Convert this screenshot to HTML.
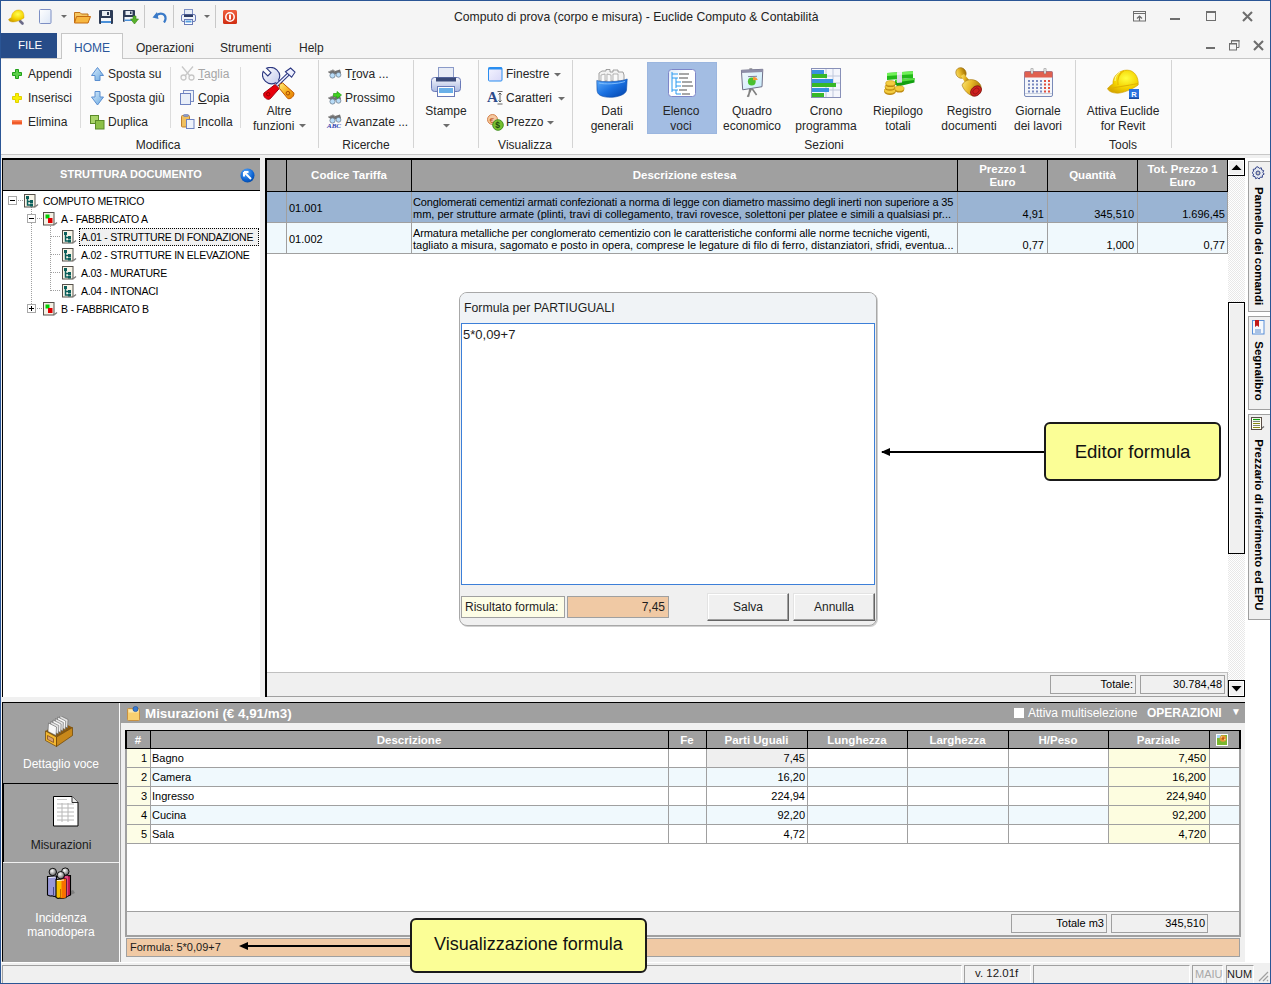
<!DOCTYPE html>
<html><head><meta charset="utf-8">
<style>
*{margin:0;padding:0;box-sizing:border-box}
html,body{width:1271px;height:984px;overflow:hidden;background:#f0f0f0;font-family:"Liberation Sans",sans-serif;color:#000}
.a{position:absolute}
.t{position:absolute;white-space:nowrap;line-height:1}
.rb{font-size:12px;color:#262626}
.c{text-align:center}
.g{font-size:11px}
.hd{color:#fff;font-weight:bold;font-size:11.5px;text-align:center}
</style></head><body>
<!-- window frame -->
<div class="a" style="left:0;top:0;width:1271px;height:984px;background:#f0f0f0;border:1px solid #2a5595"></div>

<!-- TITLE BAR -->
<div class="a" style="left:1px;top:1px;width:1269px;height:32px;background:#f5f5f5"></div>
<div class="t rb" style="left:454px;top:11px;font-size:12.2px;color:#222">Computo di prova (corpo e misura) - Euclide Computo &amp; Contabilità</div>

<svg class="a" style="left:8px;top:9px" width="17" height="17" viewBox="0 0 17 17"><defs><radialGradient id="hg" cx="0.6" cy="0.35" r="0.7"><stop offset="0" stop-color="#ffff50"/><stop offset="0.6" stop-color="#f4d000"/><stop offset="1" stop-color="#d0a000"/></radialGradient></defs><path d="M12 12 L14.5 14.5" stroke="#6a6a88" stroke-width="2.6" stroke-linecap="round"/><path d="M0.5 10.5 C1.5 9.5 2.5 9 3.5 8.5 C3.5 5 5.5 1.5 10 1 C14 0.6 16 3.5 16 7.5 L16 9 C12 11.5 7.5 13 5 13 C2.5 13 0.8 12 0.5 10.5 Z" fill="url(#hg)" stroke="#d0a000" stroke-width="0.4"/></svg>
<svg class="a" style="left:39px;top:9px" width="13" height="15" viewBox="0 0 13 15"><defs><linearGradient id="nd" x1="0" y1="0" x2="1" y2="1"><stop offset="0" stop-color="#fff"/><stop offset="1" stop-color="#dce6f5"/></linearGradient></defs><rect x="0.5" y="0.5" width="11.5" height="14" fill="url(#nd)" stroke="#7d8fc4" rx="1"/></svg>
<svg class="a" style="left:61px;top:15px" width="6" height="4" viewBox="0 0 6 4"><path d="M0 0 H6 L3 3 Z" fill="#6b6b6b"/></svg>
<svg class="a" style="left:74px;top:11px" width="17" height="13" viewBox="0 0 17 13"><path d="M0.5 1.5 H6 L7.5 3 H14 V11.5 H0.5 Z" fill="#f5c660" stroke="#c07018"/><path d="M2.5 5.5 H16.5 L14 12 H0.5 Z" fill="#f7b740" stroke="#c46a10"/></svg>
<svg class="a" style="left:99px;top:10px" width="15" height="15" viewBox="0 0 15 15"><rect x="0" y="0" width="14" height="14" rx="1" fill="#2d3b56"/><rect x="3" y="1" width="8" height="5" fill="#e8ecf2"/><rect x="8" y="2" width="2" height="3" fill="#2d3b56"/><rect x="2" y="8" width="10" height="6" fill="#f4f6fa"/><rect x="2" y="11" width="10" height="2" fill="#4a90d8"/></svg>
<svg class="a" style="left:123px;top:10px" width="16" height="15" viewBox="0 0 16 15"><rect x="0" y="0" width="12" height="12" rx="1" fill="#2d3b56"/><rect x="2.5" y="1" width="7" height="4" fill="#e8ecf2"/><rect x="7" y="1.5" width="1.5" height="2.5" fill="#2d3b56"/><rect x="1.5" y="7" width="9" height="5" fill="#f4f6fa"/><rect x="1.5" y="9.5" width="9" height="1.5" fill="#4a90d8"/><path d="M10 6 H13 V9 H15.5 L11.5 14 L7.5 9 H10 Z" fill="#58b02c" stroke="#3a8a18" stroke-width="0.6"/></svg>
<div class="a" style="left:144px;top:5px;width:1px;height:23px;background:#c8c8c8"></div>
<svg class="a" style="left:152px;top:11px" width="15" height="12" viewBox="0 0 15 12"><path d="M4 4.5 C9 1 14 3 13.5 8 C13.3 9.5 12.8 10.5 12 11.5" stroke="#3a7ac8" stroke-width="2.2" fill="none"/><path d="M0.5 6.5 L5 1 L6.5 8 Z" fill="#3a7ac8"/></svg>
<div class="a" style="left:173px;top:5px;width:1px;height:23px;background:#c8c8c8"></div>
<svg class="a" style="left:181px;top:9px" width="15" height="16" viewBox="0 0 15 16"><rect x="3.5" y="0.5" width="8" height="6" fill="#e6ecf6" stroke="#7d8fc4"/><rect x="0.5" y="5.5" width="14" height="7" rx="1.5" fill="#f0f3fa" stroke="#6a7cb8"/><rect x="3" y="5.5" width="9" height="2.5" fill="#2d3b66"/><rect x="3.5" y="10.5" width="8" height="5" fill="#fff" stroke="#6a7cb8"/><rect x="4.5" y="11.5" width="6" height="2" fill="#5aa0e0"/></svg>
<svg class="a" style="left:204px;top:15px" width="6" height="4" viewBox="0 0 6 4"><path d="M0 0 H6 L3 3 Z" fill="#6b6b6b"/></svg>
<div class="a" style="left:215px;top:5px;width:1px;height:23px;background:#c8c8c8"></div>
<svg class="a" style="left:223px;top:10px" width="15" height="15" viewBox="0 0 15 15"><defs><linearGradient id="pw" x1="0" y1="0" x2="0" y2="1"><stop offset="0" stop-color="#f06040"/><stop offset="1" stop-color="#d02c10"/></linearGradient></defs><rect x="0" y="0" width="14" height="14" rx="1.5" fill="url(#pw)"/><circle cx="7" cy="7" r="4.2" stroke="#fff" stroke-width="1.5" fill="none"/><rect x="6" y="4.5" width="2" height="5" fill="#fff"/></svg>
<svg class="a" style="left:1133px;top:11px" width="14" height="11" viewBox="0 0 14 11"><rect x="0.5" y="0.5" width="12" height="9.5" fill="none" stroke="#6e6e6e"/><path d="M1 2.5 H12.5" stroke="#6e6e6e"/><path d="M6.5 10 V5 M4 7.5 L6.5 5 L9 7.5" stroke="#6e6e6e" stroke-width="1.2" fill="none"/></svg>
<div class="a" style="left:1170px;top:18px;width:10px;height:2px;background:#6e6e6e"></div>
<svg class="a" style="left:1206px;top:11px" width="10" height="10" viewBox="0 0 10 10"><rect x="0.5" y="0.5" width="9" height="9" fill="none" stroke="#6e6e6e"/><rect x="0" y="0" width="10" height="2" fill="#6e6e6e"/></svg>
<svg class="a" style="left:1242px;top:11px" width="11" height="11" viewBox="0 0 11 11"><path d="M1 1 L10 10 M10 1 L1 10" stroke="#6e6e6e" stroke-width="2.1"/></svg>
<!-- TABS ROW -->
<div class="a" style="left:1px;top:33px;width:1269px;height:25px;background:#f5f5f5"></div>
<div class="a" style="left:1px;top:58px;width:1269px;height:1px;background:#c6c6c6"></div>
<div class="a" style="left:1px;top:33px;width:56px;height:25px;background:#274c88"></div>
<div class="t" style="left:18px;top:40px;font-size:11.5px;color:#fff">FILE</div>
<div class="a" style="left:61px;top:33px;width:62px;height:26px;background:#fbfbfb;border:1px solid #c6c6c6;border-bottom:none"></div>
<div class="t rb" style="left:74px;top:42px;color:#2b579a">HOME</div>
<div class="t rb" style="left:136px;top:42px">Operazioni</div>
<div class="t rb" style="left:220px;top:42px">Strumenti</div>
<div class="t rb" style="left:299px;top:42px">Help</div>

<div class="a" style="left:1206px;top:47px;width:9px;height:2px;background:#6e6e6e"></div>
<svg class="a" style="left:1229px;top:40px" width="11" height="11" viewBox="0 0 11 11"><rect x="0.5" y="3.5" width="7" height="6.5" fill="none" stroke="#6e6e6e"/><rect x="0" y="3" width="8" height="1.5" fill="#6e6e6e"/><path d="M2.5 3 V0.5 H10 V7.5 H8" fill="none" stroke="#6e6e6e"/><rect x="2.5" y="0" width="8" height="1.5" fill="#6e6e6e"/></svg>
<svg class="a" style="left:1253px;top:40px" width="11" height="11" viewBox="0 0 11 11"><path d="M1 1 L10 10 M10 1 L1 10" stroke="#6e6e6e" stroke-width="2.1"/></svg>
<!-- RIBBON BODY -->
<div class="a" style="left:1px;top:59px;width:1269px;height:95px;background:#fbfbfb"></div>
<div class="a" style="left:1px;top:154px;width:1269px;height:1px;background:#c8c8c8"></div>
<div class="a" style="left:1px;top:155px;width:1269px;height:3px;background:#f0f0f0"></div>

<div id="ribbon"></div>
<div class="a" style="left:647px;top:62px;width:70px;height:72px;background:#a3bde3;border:1px solid #9bb6df"></div>
<svg class="a" style="left:12px;top:69px" width="11" height="11" viewBox="0 0 11 11"><path d="M3.5 0.5 H6.5 V3.5 H9.5 V6.5 H6.5 V9.5 H3.5 V6.5 H0.5 V3.5 H3.5 Z" fill="#5cd04a" stroke="#20a018"/></svg>
<svg class="a" style="left:12px;top:93px" width="11" height="11" viewBox="0 0 11 11"><path d="M3.5 0.5 H6.5 V3.5 H9.5 V6.5 H6.5 V9.5 H3.5 V6.5 H0.5 V3.5 H3.5 Z" fill="#f8f000" stroke="#e0d000"/></svg>
<svg class="a" style="left:12px;top:120px" width="11" height="5" viewBox="0 0 11 5"><rect x="0" y="0" width="10" height="4.5" fill="#f05a28"/><rect x="0" y="0" width="10" height="1.5" fill="#ff8a60"/></svg>
<svg class="a" style="left:91px;top:67px" width="13" height="15" viewBox="0 0 13 15"><defs><linearGradient id="ua" x1="0" y1="0" x2="1" y2="1"><stop offset="0" stop-color="#d8ecfc"/><stop offset="1" stop-color="#6aa8e0"/></linearGradient></defs><path d="M6.5 0.5 L12.5 8.5 H9 V13.5 H4 V8.5 H0.5 Z" fill="url(#ua)" stroke="#5a8ed0"/></svg>
<svg class="a" style="left:91px;top:91px" width="13" height="15" viewBox="0 0 13 15"><defs><linearGradient id="da" x1="0" y1="0" x2="1" y2="1"><stop offset="0" stop-color="#d8ecfc"/><stop offset="1" stop-color="#6aa8e0"/></linearGradient></defs><path d="M6.5 14 L12.5 6 H9 V0.5 H4 V6 H0.5 Z" fill="url(#da)" stroke="#5a8ed0"/></svg>
<svg class="a" style="left:90px;top:115px" width="15" height="15" viewBox="0 0 15 15"><rect x="0.5" y="0.5" width="8" height="8" fill="#a8d468" stroke="#5a8a28"/><rect x="5.5" y="5.5" width="8.5" height="8.5" fill="#8cc048" stroke="#5a8a28"/></svg>
<svg class="a" style="left:180px;top:66px" width="15" height="15" viewBox="0 0 15 15"><path d="M2 0.5 L10 10 M13 0.5 L5 10" stroke="#c8c8c8" stroke-width="1.3"/><circle cx="3.5" cy="11.5" r="2.5" fill="none" stroke="#c8c8c8" stroke-width="1.3"/><circle cx="11.5" cy="11.5" r="2.5" fill="none" stroke="#c8c8c8" stroke-width="1.3"/></svg>
<svg class="a" style="left:180px;top:90px" width="15" height="15" viewBox="0 0 15 15"><rect x="3.5" y="0.5" width="10" height="11" fill="#eef2fa" stroke="#7d8fc4"/><rect x="0.5" y="3.5" width="10" height="11" fill="#e8eef8" stroke="#6e82c0"/></svg>
<svg class="a" style="left:181px;top:114px" width="14" height="15" viewBox="0 0 14 15"><rect x="0.5" y="1.5" width="8" height="11.5" rx="1" fill="#f0c060" stroke="#c08030"/><rect x="2.5" y="0.5" width="5" height="2" rx="0.8" fill="#8a9ac8" stroke="#6a7ab0" stroke-width="0.6"/><rect x="5.5" y="5.5" width="7.5" height="9" fill="#eef2fa" stroke="#6e82c0"/></svg>
<svg class="a" style="left:262px;top:67px" width="34" height="33" viewBox="0 0 34 33"><defs><linearGradient id="wr" x1="0" y1="0" x2="1" y2="1"><stop offset="0" stop-color="#ffffff"/><stop offset="1" stop-color="#b8c0e8"/></linearGradient><linearGradient id="oh" x1="0" y1="0" x2="1" y2="1"><stop offset="0" stop-color="#fff080"/><stop offset="0.5" stop-color="#f8b020"/><stop offset="1" stop-color="#e07800"/></linearGradient></defs><path d="M4.5 1.2 L9 5.7 L5.8 8.9 L1.2 4.4 C0 7.5 0.5 11.5 3.5 14.3 C6.5 17 10.5 17.5 13.8 15.8 L18 19.5 L20.5 17 L16.6 13 C18.3 9.8 17.8 5.6 14.8 2.8 C12 0.4 8 -0.2 4.5 1.2 Z" fill="url(#wr)" stroke="#2a3680" stroke-width="1.1"/><path d="M14.5 18.5 L27 6.5" stroke="#2a3680" stroke-width="3.6"/><path d="M14.5 18.5 L27 6.5" stroke="#eef0ff" stroke-width="1.6"/><path d="M23.5 4.8 L28.6 1 L33 5.2 L29.6 10.2 L27.4 8.2 L25.6 6.6 Z" fill="#eef0ff" stroke="#2a3680" stroke-width="1.1"/><path d="M1.8 26.2 L13 17.6 L17.2 21.6 L8.2 31.8 C5.5 33.5 0.8 30.5 1.8 26.2 Z" fill="#e8000c" stroke="#a00010" stroke-width="1"/><circle cx="6.2" cy="27.2" r="1.7" fill="none" stroke="#8a0000" stroke-width="0.9"/><path d="M17.5 17.5 L20.5 15.8 L31.8 25.8 C32.8 28.8 28.8 32.6 25.8 31.6 L17.2 21.2 Z" fill="url(#oh)" stroke="#c05800" stroke-width="1"/><circle cx="25.9" cy="26.2" r="1.8" fill="none" stroke="#a04000" stroke-width="0.9"/></svg>
<svg class="a" style="left:327px;top:69px" width="15" height="10" viewBox="0 0 15 10"><path d="M1 3 L6 0.5 L8 2 L13 0.5 L14 4 L10 5 L5 6 Z" fill="#707070"/><path d="M1 3 L6 1 L8 2.5" stroke="#a0a0a0" stroke-width="0.8" fill="none"/><circle cx="5.5" cy="6.5" r="2.6" fill="#b8dcf8" stroke="#708090" stroke-width="0.8"/><circle cx="11.5" cy="5.8" r="2.4" fill="#b8dcf8" stroke="#708090" stroke-width="0.8"/></svg>
<svg class="a" style="left:327px;top:95px" width="15" height="10" viewBox="0 0 15 10"><path d="M1 3 L6 0.5 L8 2 L13 0.5 L14 4 L10 5 L5 6 Z" fill="#707070"/><path d="M1 3 L6 1 L8 2.5" stroke="#a0a0a0" stroke-width="0.8" fill="none"/><circle cx="5.5" cy="6.5" r="2.6" fill="#b8dcf8" stroke="#708090" stroke-width="0.8"/><circle cx="11.5" cy="5.8" r="2.4" fill="#b8dcf8" stroke="#708090" stroke-width="0.8"/></svg>
<svg class="a" style="left:333px;top:91px" width="9" height="8" viewBox="0 0 9 8"><path d="M0.5 2.5 H4 V0.5 L8.5 4 L4 7.5 V5.5 H0.5 Z" fill="#40d020" stroke="#20a010" stroke-width="0.7"/></svg>
<svg class="a" style="left:327px;top:114px" width="15" height="10" viewBox="0 0 15 10"><path d="M1 3 L6 0.5 L8 2 L13 0.5 L14 4 L10 5 L5 6 Z" fill="#707070"/><path d="M1 3 L6 1 L8 2.5" stroke="#a0a0a0" stroke-width="0.8" fill="none"/><circle cx="5.5" cy="6.5" r="2.6" fill="#b8dcf8" stroke="#708090" stroke-width="0.8"/><circle cx="11.5" cy="5.8" r="2.4" fill="#b8dcf8" stroke="#708090" stroke-width="0.8"/></svg>
<div class="t" style="left:327px;top:123px;font-size:7px;font-style:italic;font-family:'Liberation Serif',serif;color:#2a40b0;font-weight:bold">ABC</div>
<svg class="a" style="left:431px;top:67px" width="31" height="31" viewBox="0 0 31 31"><defs><linearGradient id="pb" x1="0" y1="0" x2="0" y2="1"><stop offset="0" stop-color="#f4f6fc"/><stop offset="1" stop-color="#aab8e0"/></linearGradient></defs><rect x="7.5" y="0.5" width="15" height="12" fill="#e8ecf6" stroke="#8a9ac8"/><rect x="0.5" y="10.5" width="29" height="14" rx="3" fill="url(#pb)" stroke="#6a7ab8"/><rect x="5" y="10.5" width="20" height="4" fill="#3a4a78"/><rect x="6.5" y="19.5" width="17" height="10" fill="#fff" stroke="#6a7ab8"/><rect x="8" y="21" width="14" height="5" fill="#6ab0e8"/></svg>
<svg class="a" style="left:488px;top:67px" width="15" height="15" viewBox="0 0 15 15"><defs><linearGradient id="fw" x1="0" y1="0" x2="1" y2="1"><stop offset="0" stop-color="#f4f4ff"/><stop offset="1" stop-color="#d8d8f8"/></linearGradient></defs><rect x="0.5" y="0.5" width="13.5" height="13.5" rx="1" fill="url(#fw)" stroke="#2a8ef0"/><rect x="0.5" y="0.5" width="13.5" height="2" fill="#2a8ef0"/></svg>
<div class="t" style="left:487px;top:90px;font-size:15px;font-weight:bold;font-family:'Liberation Serif',serif;color:#2a4a8a">A</div>
<svg class="a" style="left:497px;top:91px" width="6" height="14" viewBox="0 0 6 14"><path d="M0.5 0.5 H5.5 M3 2 V11 M1.5 3.5 L3 2 L4.5 3.5 M1.5 9.5 L3 11 L4.5 9.5 M0.5 13 H5.5" stroke="#404040" stroke-width="0.8" fill="none"/></svg>
<svg class="a" style="left:487px;top:114px" width="17" height="17" viewBox="0 0 17 17"><circle cx="5.5" cy="5.5" r="5" fill="#f4c8a0" stroke="#d07840" stroke-width="0.9"/><text x="2.5" y="8.5" font-size="8" fill="#c05020" font-family="Liberation Sans">€</text><circle cx="11" cy="11" r="5.3" fill="#78c030" stroke="#3a8a18" stroke-width="0.9"/><text x="8.3" y="14.3" font-size="8.5" font-weight="bold" fill="#204a10" font-family="Liberation Sans">$</text></svg>
<svg class="a" style="left:596px;top:68px" width="32" height="30" viewBox="0 0 32 30"><defs><linearGradient id="bk" x1="0" y1="0" x2="1" y2="1"><stop offset="0" stop-color="#60b0ff"/><stop offset="0.5" stop-color="#1a70e0"/><stop offset="1" stop-color="#0040a8"/></linearGradient></defs><path d="M3 13 L3 5 L6 3 L10 3 L10 1.5 L14 1.5 L14 4 L17 4 L17 2 L22 2 L22 4 L27 4 L28 7 L28 13 Z" fill="#f2f2f2" stroke="#8a8a8a" stroke-width="0.8"/><path d="M5 14 L5 7 L9 6 L9 14 M11 14 L11 6 L15 7 L15 14 M17 14 L17 6 L22 6 L22 14" fill="#fafafa" stroke="#9a9a9a" stroke-width="0.7"/><path d="M0.8 12.5 C6 14.5 24 14 31.2 11 L30.5 22 C30 25.5 26 27.5 20 28.8 C13 30 6 29 3 26.5 C1.8 25.5 1.2 24 1 22 Z" fill="url(#bk)" stroke="#0a4aa8" stroke-width="0.6"/><path d="M3 15 C8 16.5 22 16 29 13.5" stroke="#90c8ff" stroke-width="0.8" fill="none"/></svg>
<svg class="a" style="left:668px;top:69px" width="28" height="28" viewBox="0 0 28 28"><defs><linearGradient id="el" x1="0" y1="0" x2="1" y2="1"><stop offset="0" stop-color="#dceaf8"/><stop offset="0.35" stop-color="#fff"/></linearGradient></defs><rect x="0.5" y="0.5" width="27" height="27" rx="3" fill="url(#el)" stroke="#7e86c8"/><path d="M4 3 V23 M4 5 H10 M4 9 H10 M8 9 V19 M8 13 H13 M8 17 H13 M4 21 H10 M8 21 V25 H13" stroke="#2a9af0" stroke-width="1" fill="none"/><path d="M11 5 H21 M11 9 H20 M14 13 H24 M14 17 H25 M11 21 H19 M14 25 H22" stroke="#8a8a8a" stroke-width="1.6"/></svg>
<svg class="a" style="left:740px;top:67px" width="25" height="32" viewBox="0 0 25 32"><defs><linearGradient id="bd" x1="0" y1="0" x2="1" y2="1"><stop offset="0" stop-color="#f4f8fc"/><stop offset="1" stop-color="#c8ecfc"/></linearGradient></defs><path d="M11.5 21.5 L7.5 29.8 M10 21.5 L8.5 29.5 M12 21.5 L16.6 28" stroke="#808080" stroke-width="1.6"/><rect x="9.2" y="1" width="3.2" height="2" rx="0.8" fill="#a8a8a8"/><path d="M1.4 3.3 L22.8 2.3 L22 19.7 L2.7 22.8 Z" fill="url(#bd)" stroke="#707088" stroke-width="1"/><path d="M1.4 3.3 L22.8 2.3 L22.8 5 L1.6 6 Z" fill="#8e8ea8"/><path d="M8.1 9.6 L17 9.3" stroke="#707090" stroke-width="0.9"/><circle cx="11.8" cy="14.5" r="3.9" fill="#48c030"/><path d="M13 10.2 A4 4 0 0 1 17.8 12.9 L13 13.2 Z" fill="#f89838"/></svg>
<svg class="a" style="left:811px;top:68px" width="30" height="30" viewBox="0 0 30 30"><rect x="0.5" y="0.5" width="29" height="29" fill="#f4f6fc" stroke="#8890b8"/><path d="M15 1 V29 M22 1 V29 M1 8 H29 M1 15 H29 M1 22 H29" stroke="#c0c8dc" stroke-width="1"/><rect x="1" y="2" width="12" height="4" fill="#3a90e0"/><rect x="1" y="6" width="15" height="4" fill="#38b828"/><rect x="1" y="11" width="21" height="4" fill="#3a90e0"/><rect x="1" y="15" width="24" height="4" fill="#38b828"/><rect x="1" y="20" width="17" height="4" fill="#3a90e0"/><rect x="1" y="25" width="12" height="4" fill="#38b828"/></svg>
<svg class="a" style="left:884px;top:68px" width="31" height="30" viewBox="0 0 31 30"><path d="M11 12 L30.5 10 L30.5 14.5 L14 18.5 L11 16.5 Z" fill="#12a010"/><path d="M11 12 L30.5 10 L30.5 12 L12 14.2 Z" fill="#58e040"/><path d="M3 5 L29 3.2 L29 10 L3 12 Z" fill="#22b818"/><path d="M3 5 L29 3.2 L29 6.2 L3 8 Z" fill="#70f058"/><path d="M13 4.2 L18 3.9 L18 14.5 L13 15 Z" fill="#dcd8e4"/><path d="M13 4.2 L18 3.9 L18 6.5 L13 6.9 Z" fill="#f4f0f8"/><ellipse cx="6" cy="23.7" rx="5.8" ry="3.2" fill="#c08a10"/><ellipse cx="6" cy="22.5" rx="5.8" ry="3.2" fill="#f4cc40" stroke="#b88a10" stroke-width="0.5"/><ellipse cx="6" cy="20.0" rx="5" ry="2.8" fill="#c08a10"/><ellipse cx="6" cy="18.8" rx="5" ry="2.8" fill="#f4cc40" stroke="#b88a10" stroke-width="0.5"/><ellipse cx="6.5" cy="16.4" rx="4.8" ry="2.6" fill="#c08a10"/><ellipse cx="6.5" cy="15.2" rx="4.8" ry="2.6" fill="#f4cc40" stroke="#b88a10" stroke-width="0.5"/><ellipse cx="15.5" cy="21.7" rx="4.6" ry="2.8" fill="#c08a10"/><ellipse cx="15.5" cy="20.5" rx="4.6" ry="2.8" fill="#f4cc40" stroke="#b88a10" stroke-width="0.5"/></svg>
<svg class="a" style="left:955px;top:67px" width="28" height="31" viewBox="0 0 28 31"><defs><linearGradient id="st" x1="0" y1="0" x2="1" y2="0.3"><stop offset="0" stop-color="#fbe878"/><stop offset="0.5" stop-color="#e8b828"/><stop offset="1" stop-color="#a87808"/></linearGradient></defs><ellipse cx="6" cy="6" rx="5" ry="5.5" transform="rotate(-35 6 6)" fill="url(#st)" stroke="#a07010" stroke-width="0.6"/><path d="M6 9 L11 17 L15 14 L9 7 Z" fill="url(#st)"/><path d="M7 18 C10 12 18 11 23 15 C27 18 27 23 25 26 L18 29 C14 28 9 24 7 18 Z" fill="url(#st)" stroke="#a07010" stroke-width="0.6"/><ellipse cx="21" cy="24" rx="6" ry="4.5" transform="rotate(-40 21 24)" fill="#d02020" stroke="#801010" stroke-width="0.8"/><ellipse cx="21" cy="24" rx="3.5" ry="2.5" transform="rotate(-40 21 24)" fill="none" stroke="#801010" stroke-width="0.6"/></svg>
<svg class="a" style="left:1024px;top:68px" width="29" height="29" viewBox="0 0 29 29"><rect x="0.5" y="3.5" width="28" height="25" rx="1.5" fill="#f4f6fa" stroke="#7a8ab8"/><rect x="0.5" y="3.5" width="28" height="6" fill="#e06050"/><rect x="7" y="0" width="2" height="6" rx="1" fill="#fff" stroke="#777" stroke-width="0.6"/><rect x="20" y="0" width="2" height="6" rx="1" fill="#fff" stroke="#777" stroke-width="0.6"/><rect x="4" y="12.0" width="2" height="2" fill="#7a8ac0"/><rect x="8" y="12.0" width="2" height="2" fill="#7a8ac0"/><rect x="12" y="12.0" width="2" height="2" fill="#7a8ac0"/><rect x="16" y="12.0" width="2" height="2" fill="#7a8ac0"/><rect x="20" y="12.0" width="2" height="2" fill="#e05040"/><rect x="24" y="12.0" width="2" height="2" fill="#e05040"/><rect x="4" y="15.5" width="2" height="2" fill="#7a8ac0"/><rect x="8" y="15.5" width="2" height="2" fill="#7a8ac0"/><rect x="12" y="15.5" width="2" height="2" fill="#7a8ac0"/><rect x="16" y="15.5" width="2" height="2" fill="#7a8ac0"/><rect x="20" y="15.5" width="2" height="2" fill="#e05040"/><rect x="24" y="15.5" width="2" height="2" fill="#e05040"/><rect x="4" y="19.0" width="2" height="2" fill="#7a8ac0"/><rect x="8" y="19.0" width="2" height="2" fill="#7a8ac0"/><rect x="12" y="19.0" width="2" height="2" fill="#7a8ac0"/><rect x="16" y="19.0" width="2" height="2" fill="#7a8ac0"/><rect x="20" y="19.0" width="2" height="2" fill="#e05040"/><rect x="24" y="19.0" width="2" height="2" fill="#e05040"/><rect x="4" y="22.5" width="2" height="2" fill="#7a8ac0"/><rect x="8" y="22.5" width="2" height="2" fill="#7a8ac0"/><rect x="12" y="22.5" width="2" height="2" fill="#7a8ac0"/><rect x="16" y="22.5" width="2" height="2" fill="#7a8ac0"/><rect x="20" y="22.5" width="2" height="2" fill="#e05040"/><rect x="24" y="22.5" width="2" height="2" fill="#e05040"/><rect x="1" y="25" width="27" height="1" fill="#c8d0e0"/></svg>
<svg class="a" style="left:1107px;top:69px" width="33" height="31" viewBox="0 0 33 31"><defs><radialGradient id="hb" cx="0.6" cy="0.35" r="0.7"><stop offset="0" stop-color="#ffff40"/><stop offset="0.6" stop-color="#f4d200"/><stop offset="1" stop-color="#d8a800"/></radialGradient></defs><path d="M0.5 19.6 C2 17.5 4 16 6 15 C5.5 9 9.5 3 17.5 1.3 C25 0 30.5 5 31.2 13 L31.2 16 C25 20.5 15.5 24.2 10.5 24.2 C6 24.2 1.5 22.5 0.5 19.6 Z" fill="url(#hb)" stroke="#d0a000" stroke-width="0.6"/><path d="M11 16 C10 10 12 4 17 1.8" stroke="#e8b800" stroke-width="1.2" fill="none"/><path d="M8 12 C8 8 10 4.5 13 3" stroke="#fff8a0" stroke-width="1" fill="none"/><path d="M2 20.5 C6 18 20 17 31 14.5" stroke="#e0b000" stroke-width="1" fill="none"/><rect x="22" y="20" width="10" height="10" fill="#2a72e0"/><rect x="22" y="28.5" width="10" height="1.5" fill="#1a4aa0"/><text x="24.3" y="27.6" font-size="7.5" font-weight="bold" fill="#fff" font-family="Liberation Sans">R</text></svg>
<div class="t" style="left:28px;top:68px;font-size:12px;color:#262626;">Appendi</div>
<div class="t" style="left:28px;top:92px;font-size:12px;color:#262626;">Inserisci</div>
<div class="t" style="left:28px;top:116px;font-size:12px;color:#262626;">Elimina</div>
<div class="a" style="left:80px;top:67px;width:1px;height:61px;background:#dcdcdc"></div>
<div class="t" style="left:108px;top:68px;font-size:12px;color:#262626;">Sposta su</div>
<div class="t" style="left:108px;top:92px;font-size:12px;color:#262626;">Sposta giù</div>
<div class="t" style="left:108px;top:116px;font-size:12px;color:#262626;">Duplica</div>
<div class="a" style="left:170px;top:67px;width:1px;height:61px;background:#dcdcdc"></div>
<div class="t" style="left:198px;top:68px;font-size:12px;color:#a6a6a6;"><u>T</u>aglia</div>
<div class="t" style="left:198px;top:92px;font-size:12px;color:#262626;"><u>C</u>opia</div>
<div class="t" style="left:198px;top:116px;font-size:12px;color:#262626;"><u>I</u>ncolla</div>
<div class="a" style="left:240px;top:67px;width:1px;height:61px;background:#dcdcdc"></div>
<div class="t" style="left:229px;top:105px;width:100px;text-align:center;font-size:12px;color:#262626">Altre</div>
<div class="t" style="left:253px;top:120px;font-size:12px;color:#262626;">funzioni</div>
<svg class="a" style="left:299px;top:124px" width="7" height="4"><path d="M0 0 H7 L3.5 3.5 Z" fill="#6d6d6d"/></svg>
<div class="t" style="left:108px;top:139px;width:100px;text-align:center;font-size:12px;color:#262626">Modifica</div>
<div class="a" style="left:318px;top:60px;width:1px;height:88px;background:#d4d4d4"></div>
<div class="t" style="left:345px;top:68px;font-size:12px;color:#262626;">T<u>r</u>ova ...</div>
<div class="t" style="left:345px;top:92px;font-size:12px;color:#262626;">Prossimo</div>
<div class="t" style="left:345px;top:116px;font-size:12px;color:#262626;">Avanzate ...</div>
<div class="t" style="left:316px;top:139px;width:100px;text-align:center;font-size:12px;color:#262626">Ricerche</div>
<div class="a" style="left:413px;top:60px;width:1px;height:88px;background:#d4d4d4"></div>
<div class="t" style="left:396px;top:105px;width:100px;text-align:center;font-size:12px;color:#262626">Stampe</div>
<svg class="a" style="left:443px;top:124px" width="7" height="4"><path d="M0 0 H7 L3.5 3.5 Z" fill="#6d6d6d"/></svg>
<div class="a" style="left:478px;top:60px;width:1px;height:88px;background:#d4d4d4"></div>
<div class="t" style="left:506px;top:68px;font-size:12px;color:#262626;">Finestre</div>
<svg class="a" style="left:554px;top:73px" width="7" height="4"><path d="M0 0 H7 L3.5 3.5 Z" fill="#6d6d6d"/></svg>
<div class="t" style="left:506px;top:92px;font-size:12px;color:#262626;">Caratteri</div>
<svg class="a" style="left:558px;top:97px" width="7" height="4"><path d="M0 0 H7 L3.5 3.5 Z" fill="#6d6d6d"/></svg>
<div class="t" style="left:506px;top:116px;font-size:12px;color:#262626;">Prezzo</div>
<svg class="a" style="left:547px;top:121px" width="7" height="4"><path d="M0 0 H7 L3.5 3.5 Z" fill="#6d6d6d"/></svg>
<div class="t" style="left:475px;top:139px;width:100px;text-align:center;font-size:12px;color:#262626">Visualizza</div>
<div class="a" style="left:572px;top:60px;width:1px;height:88px;background:#d4d4d4"></div>
<div class="t" style="left:562px;top:105px;width:100px;text-align:center;font-size:12px;color:#262626">Dati</div>
<div class="t" style="left:562px;top:120px;width:100px;text-align:center;font-size:12px;color:#262626">generali</div>
<div class="t" style="left:631px;top:105px;width:100px;text-align:center;font-size:12px;color:#262626">Elenco</div>
<div class="t" style="left:631px;top:120px;width:100px;text-align:center;font-size:12px;color:#262626">voci</div>
<div class="t" style="left:702px;top:105px;width:100px;text-align:center;font-size:12px;color:#262626">Quadro</div>
<div class="t" style="left:702px;top:120px;width:100px;text-align:center;font-size:12px;color:#262626">economico</div>
<div class="t" style="left:776px;top:105px;width:100px;text-align:center;font-size:12px;color:#262626">Crono</div>
<div class="t" style="left:776px;top:120px;width:100px;text-align:center;font-size:12px;color:#262626">programma</div>
<div class="t" style="left:848px;top:105px;width:100px;text-align:center;font-size:12px;color:#262626">Riepilogo</div>
<div class="t" style="left:848px;top:120px;width:100px;text-align:center;font-size:12px;color:#262626">totali</div>
<div class="t" style="left:919px;top:105px;width:100px;text-align:center;font-size:12px;color:#262626">Registro</div>
<div class="t" style="left:919px;top:120px;width:100px;text-align:center;font-size:12px;color:#262626">documenti</div>
<div class="t" style="left:988px;top:105px;width:100px;text-align:center;font-size:12px;color:#262626">Giornale</div>
<div class="t" style="left:988px;top:120px;width:100px;text-align:center;font-size:12px;color:#262626">dei lavori</div>
<div class="t" style="left:774px;top:139px;width:100px;text-align:center;font-size:12px;color:#262626">Sezioni</div>
<div class="a" style="left:1075px;top:60px;width:1px;height:88px;background:#d4d4d4"></div>
<div class="t" style="left:1073px;top:105px;width:100px;text-align:center;font-size:12px;color:#262626">Attiva Euclide</div>
<div class="t" style="left:1073px;top:120px;width:100px;text-align:center;font-size:12px;color:#262626">for Revit</div>
<div class="t" style="left:1073px;top:139px;width:100px;text-align:center;font-size:12px;color:#262626">Tools</div>
<div class="a" style="left:1171px;top:60px;width:1px;height:88px;background:#d4d4d4"></div>

<!-- LEFT TREE PANEL -->
<div class="a" style="left:2px;top:158px;width:258px;height:539px;background:#fff;border-left:1px solid #000;border-top:2px solid #000"></div>
<div class="a" style="left:3px;top:160px;width:257px;height:31px;background:#a0a0a0;border-bottom:1px solid #000"></div>
<div class="t hd" style="left:3px;top:169px;width:256px;font-size:11px">STRUTTURA DOCUMENTO</div>

<div class="a" style="left:31px;top:207px;width:1px;height:101px;background:repeating-linear-gradient(180deg,#a0a0a0 0 1px,transparent 1px 2px)"></div>
<div class="a" style="left:50px;top:226px;width:1px;height:65px;background:repeating-linear-gradient(180deg,#a0a0a0 0 1px,transparent 1px 2px)"></div>
<div class="a" style="left:8px;top:196px;width:9px;height:9px;border:1px solid #a8a8a8;background:#fff"></div><div class="a" style="left:10px;top:200px;width:5px;height:1px;background:#000"></div>
<div class="a" style="left:18px;top:200px;width:5px;height:1px;background:repeating-linear-gradient(90deg,#a0a0a0 0 1px,transparent 1px 2px)"></div>
<svg class="a" style="left:24px;top:194px" width="16" height="14" viewBox="0 0 16 14"><path d="M11.5 12.5 L14 10.5" stroke="#777" stroke-width="1.2"/><rect x="0.5" y="0.5" width="10.5" height="12.5" fill="#f8f5e8" stroke="#55504a"/><rect x="2" y="2" width="3" height="3" fill="#0b605c"/><path d="M3.5 5 V11 H7 M3.5 7.5 H7" stroke="#0b605c" stroke-width="1.5" fill="none"/><rect x="6" y="6" width="3" height="3" fill="#0b605c"/><rect x="6" y="9.5" width="3" height="3" fill="#0b605c"/></svg>
<div class="t" style="left:43px;top:196px;font-size:10.5px;letter-spacing:-0.25px">COMPUTO METRICO</div>
<div class="a" style="left:27px;top:214px;width:9px;height:9px;border:1px solid #a8a8a8;background:#fff"></div><div class="a" style="left:29px;top:218px;width:5px;height:1px;background:#000"></div>
<div class="a" style="left:37px;top:218px;width:5px;height:1px;background:repeating-linear-gradient(90deg,#a0a0a0 0 1px,transparent 1px 2px)"></div>
<svg class="a" style="left:43px;top:212px" width="16" height="14" viewBox="0 0 16 14"><path d="M11.5 12.5 L14 10.5" stroke="#777" stroke-width="1.2"/><rect x="0.5" y="0.5" width="10.5" height="12.5" fill="#f4f0e4" stroke="#55504a"/><rect x="2.5" y="2.5" width="4" height="4" fill="#00d000"/><rect x="5" y="6" width="4.5" height="5" fill="#e00000"/></svg>
<div class="t" style="left:61px;top:214px;font-size:10.5px;letter-spacing:-0.25px">A - FABBRICATO A</div>
<div class="a" style="left:51px;top:236px;width:10px;height:1px;background:repeating-linear-gradient(90deg,#a0a0a0 0 1px,transparent 1px 2px)"></div>
<svg class="a" style="left:62px;top:230px" width="16" height="14" viewBox="0 0 16 14"><path d="M11.5 12.5 L14 10.5" stroke="#777" stroke-width="1.2"/><rect x="0.5" y="0.5" width="10.5" height="12.5" fill="#f8f5e8" stroke="#55504a"/><rect x="2" y="2" width="3" height="3" fill="#0b605c"/><path d="M3.5 5 V11 H7 M3.5 7.5 H7" stroke="#0b605c" stroke-width="1.5" fill="none"/><rect x="6" y="6" width="3" height="3" fill="#0b605c"/><rect x="6" y="9.5" width="3" height="3" fill="#0b605c"/></svg>
<div class="a" style="left:79px;top:228px;width:180px;height:18px;background:#f0f0f0;border:1px dotted #000"></div>
<div class="t" style="left:81px;top:232px;font-size:10.5px;letter-spacing:-0.25px">A.01 - STRUTTURE DI FONDAZIONE</div>
<div class="a" style="left:51px;top:254px;width:10px;height:1px;background:repeating-linear-gradient(90deg,#a0a0a0 0 1px,transparent 1px 2px)"></div>
<svg class="a" style="left:62px;top:248px" width="16" height="14" viewBox="0 0 16 14"><path d="M11.5 12.5 L14 10.5" stroke="#777" stroke-width="1.2"/><rect x="0.5" y="0.5" width="10.5" height="12.5" fill="#f8f5e8" stroke="#55504a"/><rect x="2" y="2" width="3" height="3" fill="#0b605c"/><path d="M3.5 5 V11 H7 M3.5 7.5 H7" stroke="#0b605c" stroke-width="1.5" fill="none"/><rect x="6" y="6" width="3" height="3" fill="#0b605c"/><rect x="6" y="9.5" width="3" height="3" fill="#0b605c"/></svg>
<div class="t" style="left:81px;top:250px;font-size:10.5px;letter-spacing:-0.25px">A.02 - STRUTTURE IN ELEVAZIONE</div>
<div class="a" style="left:51px;top:272px;width:10px;height:1px;background:repeating-linear-gradient(90deg,#a0a0a0 0 1px,transparent 1px 2px)"></div>
<svg class="a" style="left:62px;top:266px" width="16" height="14" viewBox="0 0 16 14"><path d="M11.5 12.5 L14 10.5" stroke="#777" stroke-width="1.2"/><rect x="0.5" y="0.5" width="10.5" height="12.5" fill="#f8f5e8" stroke="#55504a"/><rect x="2" y="2" width="3" height="3" fill="#0b605c"/><path d="M3.5 5 V11 H7 M3.5 7.5 H7" stroke="#0b605c" stroke-width="1.5" fill="none"/><rect x="6" y="6" width="3" height="3" fill="#0b605c"/><rect x="6" y="9.5" width="3" height="3" fill="#0b605c"/></svg>
<div class="t" style="left:81px;top:268px;font-size:10.5px;letter-spacing:-0.25px">A.03 - MURATURE</div>
<div class="a" style="left:51px;top:290px;width:10px;height:1px;background:repeating-linear-gradient(90deg,#a0a0a0 0 1px,transparent 1px 2px)"></div>
<svg class="a" style="left:62px;top:284px" width="16" height="14" viewBox="0 0 16 14"><path d="M11.5 12.5 L14 10.5" stroke="#777" stroke-width="1.2"/><rect x="0.5" y="0.5" width="10.5" height="12.5" fill="#f8f5e8" stroke="#55504a"/><rect x="2" y="2" width="3" height="3" fill="#0b605c"/><path d="M3.5 5 V11 H7 M3.5 7.5 H7" stroke="#0b605c" stroke-width="1.5" fill="none"/><rect x="6" y="6" width="3" height="3" fill="#0b605c"/><rect x="6" y="9.5" width="3" height="3" fill="#0b605c"/></svg>
<div class="t" style="left:81px;top:286px;font-size:10.5px;letter-spacing:-0.25px">A.04 - INTONACI</div>
<div class="a" style="left:27px;top:304px;width:9px;height:9px;border:1px solid #a8a8a8;background:#fff"></div><div class="a" style="left:29px;top:308px;width:5px;height:1px;background:#000"></div><div class="a" style="left:31px;top:306px;width:1px;height:5px;background:#000"></div>
<div class="a" style="left:37px;top:308px;width:5px;height:1px;background:repeating-linear-gradient(90deg,#a0a0a0 0 1px,transparent 1px 2px)"></div>
<svg class="a" style="left:43px;top:302px" width="16" height="14" viewBox="0 0 16 14"><path d="M11.5 12.5 L14 10.5" stroke="#777" stroke-width="1.2"/><rect x="0.5" y="0.5" width="10.5" height="12.5" fill="#f4f0e4" stroke="#55504a"/><rect x="2.5" y="2.5" width="4" height="4" fill="#00d000"/><rect x="5" y="6" width="4.5" height="5" fill="#e00000"/></svg>
<div class="t" style="left:61px;top:304px;font-size:10.5px;letter-spacing:-0.25px">B - FABBRICATO B</div>
<div class="a" style="left:260px;top:158px;width:5px;height:539px;background:#f0f0f0"></div>

<!-- MAIN GRID -->
<div class="a" style="left:265px;top:158px;width:963px;height:539px;background:#fff"></div>
<div class="a" style="left:265px;top:158px;width:980px;height:2px;background:#000"></div>
<div class="a" style="left:265px;top:158px;width:2px;height:539px;background:#000"></div>
<div class="a" style="left:267px;top:160px;width:961px;height:31px;background:#a0a0a0"></div>
<div class="a" style="left:267px;top:191px;width:961px;height:1px;background:#000"></div>
<div class="a" style="left:1227px;top:160px;width:1px;height:31px;background:#000"></div>
<div class="a" style="left:286px;top:160px;width:1px;height:31px;background:#000"></div>
<div class="a" style="left:411px;top:160px;width:1px;height:31px;background:#000"></div>
<div class="a" style="left:957px;top:160px;width:1px;height:31px;background:#000"></div>
<div class="a" style="left:1047px;top:160px;width:1px;height:31px;background:#000"></div>
<div class="a" style="left:1137px;top:160px;width:1px;height:31px;background:#000"></div>
<div class="t hd" style="left:287px;top:170px;width:124px">Codice Tariffa</div>
<div class="t hd" style="left:412px;top:170px;width:545px">Descrizione estesa</div>
<div class="t hd" style="left:958px;top:163px;width:89px;line-height:13px;white-space:normal">Prezzo 1<br>Euro</div>
<div class="t hd" style="left:1048px;top:170px;width:89px">Quantità</div>
<div class="t hd" style="left:1138px;top:163px;width:89px;line-height:13px;white-space:normal">Tot. Prezzo 1<br>Euro</div>
<div class="a" style="left:267px;top:192px;width:960px;height:30px;background:#9ab4d3"></div>
<div class="a" style="left:267px;top:222px;width:961px;height:1px;background:#a0a0a0"></div>
<div class="a" style="left:267px;top:223px;width:960px;height:30px;background:#f0f9fd"></div>
<div class="a" style="left:267px;top:253px;width:961px;height:1px;background:#a0a0a0"></div>
<div class="a" style="left:286px;top:192px;width:1px;height:61px;background:#a0a0a0"></div>
<div class="a" style="left:411px;top:192px;width:1px;height:61px;background:#a0a0a0"></div>
<div class="a" style="left:957px;top:192px;width:1px;height:61px;background:#a0a0a0"></div>
<div class="a" style="left:1047px;top:192px;width:1px;height:61px;background:#a0a0a0"></div>
<div class="a" style="left:1137px;top:192px;width:1px;height:61px;background:#a0a0a0"></div>
<div class="a" style="left:1227px;top:192px;width:1px;height:61px;background:#a0a0a0"></div>
<div class="t g" style="left:289px;top:203px">01.001</div>
<div class="t g" style="letter-spacing:-0.15px;left:413px;top:196px;line-height:12px">Conglomerati cementizi armati confezionati a norma di legge con diametro massimo degli inerti non superiore a 35</div><div class="t g" style="left:413px;top:208px;line-height:12px">mm, per strutture armate (plinti, travi di collegamento, travi rovesce, solettoni per platee e simili a qualsiasi pr...</div>
<div class="t g" style="left:958px;top:209px;width:86px;text-align:right">4,91</div>
<div class="t g" style="left:1048px;top:209px;width:86px;text-align:right">345,510</div>
<div class="t g" style="left:1138px;top:209px;width:87px;text-align:right">1.696,45</div>
<div class="t g" style="left:289px;top:234px">01.002</div>
<div class="t g" style="letter-spacing:-0.1px;left:413px;top:227px;line-height:12px">Armatura metalliche per conglomerato cementizio con le caratteristiche conformi alle norme tecniche vigenti,</div><div class="t g" style="left:413px;top:239px;line-height:12px">tagliato a misura, sagomato e posto in opera, comprese le legature di filo di ferro, distanziatori, sfridi, eventua...</div>
<div class="t g" style="left:958px;top:240px;width:86px;text-align:right">0,77</div>
<div class="t g" style="left:1048px;top:240px;width:86px;text-align:right">1,000</div>
<div class="t g" style="left:1138px;top:240px;width:87px;text-align:right">0,77</div>
<div class="a" style="left:267px;top:672px;width:961px;height:1px;background:#c0c0c0"></div>
<div class="a" style="left:267px;top:673px;width:961px;height:24px;background:#f0f0f0;border-bottom:1px solid #a0a0a0;border-right:1px solid #c0c0c0"></div>
<div class="a" style="left:1050px;top:675px;width:86px;height:19px;border:1px solid #a0a0a0"></div>
<div class="t g" style="left:1050px;top:679px;width:83px;text-align:right">Totale:</div>
<div class="a" style="left:1140px;top:675px;width:85px;height:19px;border:1px solid #a0a0a0"></div>
<div class="t g" style="left:1140px;top:679px;width:82px;text-align:right">30.784,48</div>
<div class="a" style="left:1228px;top:160px;width:17px;height:537px;background-color:#f4f4f4;background-image:repeating-conic-gradient(#fff 0 25%,#e8e8e8 0 50%);background-size:2px 2px"></div>
<div class="a" style="left:1228px;top:160px;width:17px;height:16px;background:#f0f0f0;border-right:1px solid #000;border-bottom:1px solid #000;box-shadow:inset 1px 1px 0 #fff,inset -1px -1px 0 #fff"></div>
<svg class="a" style="left:1231px;top:164px" width="12" height="8"><path d="M0.5 6 L10.5 6 L5.5 0.8 Z" fill="#000"/></svg>
<div class="a" style="left:1228px;top:302px;width:17px;height:252px;background:#f0f0f0;border:1px solid #000;box-shadow:inset 1px 1px 0 #fff"></div>
<div class="a" style="left:1228px;top:680px;width:17px;height:17px;background:#f0f0f0;border:1px solid #000;box-shadow:inset 1px 1px 0 #fff,inset -1px -1px 0 #fff"></div>
<svg class="a" style="left:1231px;top:685px" width="12" height="8"><path d="M0.5 1 L10.5 1 L5.5 6.5 Z" fill="#000"/></svg>
<div class="a" style="left:1245px;top:158px;width:25px;height:805px;background:#fff"></div>
<div class="a" style="left:1248px;top:161px;width:22px;height:151px;background:#f0f0f0;border:1px solid #a0a0a0;border-right:none"></div>
<div class="a" style="left:1248px;top:316px;width:22px;height:94px;background:#f0f0f0;border:1px solid #a0a0a0;border-right:none"></div>
<div class="a" style="left:1248px;top:414px;width:22px;height:206px;background:#f0f0f0;border:1px solid #a0a0a0;border-right:none"></div>
<div class="t" style="left:1258px;top:246px;font-size:11.5px;font-weight:bold;transform:translate(-50%,-50%) rotate(90deg);">Pannello dei comandi</div>
<div class="t" style="left:1258px;top:371px;font-size:11.5px;font-weight:bold;transform:translate(-50%,-50%) rotate(90deg);">Segnalibro</div>
<div class="t" style="left:1258px;top:525px;font-size:11.5px;font-weight:bold;transform:translate(-50%,-50%) rotate(90deg);">Prezzario di riferimento ed EPU</div>

<!-- BOTTOM -->
<div class="a" style="left:2px;top:697px;width:1243px;height:5px;background:#f0f0f0"></div>
<div class="a" style="left:2px;top:702px;width:1243px;height:1px;background:#000"></div>
<div class="a" style="left:2px;top:703px;width:1243px;height:260px;background:#f0f0f0"></div>
<!-- nav panel -->
<div class="a" style="left:2px;top:703px;width:117px;height:259px;background:#a0a0a0;border-left:1px solid #000;border-bottom:1px solid #a0a0a0"></div>
<div class="a" style="left:119px;top:703px;width:1px;height:259px;background:#fafafa"></div><div class="a" style="left:120px;top:703px;width:1px;height:259px;background:#a0a0a0"></div>
<div class="a" style="left:3px;top:783px;width:115px;height:79px;border-top:1px solid #000;border-left:1px solid #000"></div>
<div class="a" style="left:3px;top:862px;width:116px;height:1px;background:#f0f0f0"></div>
<div class="t c" style="left:3px;top:758px;width:116px;font-size:12px;color:#fff">Dettaglio voce</div>
<div class="t c" style="left:3px;top:839px;width:116px;font-size:12px;color:#1a1a1a">Misurazioni</div>
<div class="t c" style="left:3px;top:911px;width:116px;font-size:12px;color:#fff;line-height:14px;white-space:normal">Incidenza<br>manodopera</div>
<!-- misurazioni header -->
<div class="a" style="left:121px;top:703px;width:1124px;height:20px;background:#a0a0a0"></div>
<div class="t" style="left:145px;top:707px;font-size:13.4px;font-weight:bold;color:#fff">Misurazioni (€ 4,91/m3)</div>

<div class="t" style="left:1028px;top:707px;font-size:12px;color:#fff">Attiva multiselezione</div>
<div class="t" style="left:1147px;top:707px;font-size:12px;font-weight:bold;color:#fff">OPERAZIONI</div>
<div class="t" style="left:1231px;top:707px;font-size:10px;color:#fff">▼</div>
<!-- grid box -->
<div class="a" style="left:125px;top:730px;width:1116px;height:207px;background:#fff;border:2px solid #a0a0a0;border-top:none"></div>
<div class="a" style="left:125px;top:730px;width:1116px;height:19px;background:#a0a0a0;border:1px solid #000;border-left-width:2px;border-right-width:2px;border-top-width:1px"></div>
<div class="t hd" style="left:126px;top:735px;width:24px">#</div>
<div class="t hd" style="left:150px;top:735px;width:518px">Descrizione</div>
<div class="t hd" style="left:668px;top:735px;width:38px">Fe</div>
<div class="t hd" style="left:706px;top:735px;width:101px">Parti Uguali</div>
<div class="t hd" style="left:807px;top:735px;width:100px">Lunghezza</div>
<div class="t hd" style="left:907px;top:735px;width:101px">Larghezza</div>
<div class="t hd" style="left:1008px;top:735px;width:100px">H/Peso</div>
<div class="t hd" style="left:1108px;top:735px;width:101px">Parziale</div>
<svg class="a" style="left:1216px;top:734px" width="12" height="12" viewBox="0 0 12 12"><rect x="0" y="0" width="12" height="12" fill="#fff"/><rect x="1" y="1" width="10" height="10" fill="#7ab830"/><rect x="1" y="1" width="4" height="3" fill="#a8d8f8"/><circle cx="7" cy="4.5" r="3.3" fill="#e89838"/><circle cx="7" cy="4.5" r="1.3" fill="#c05810"/><circle cx="5.5" cy="3" r="0.8" fill="#f8d890"/><circle cx="8.8" cy="5.5" r="0.8" fill="#f8d890"/></svg>
<div class="a" style="left:127px;top:749px;width:1112px;height:18px;background:#ffffff"></div>
<div class="a" style="left:127px;top:749px;width:23px;height:18px;background:#fdfde6"></div>
<div class="a" style="left:1109px;top:749px;width:100px;height:18px;background:#fdfde0"></div>
<div class="a" style="left:707px;top:749px;width:100px;height:18px;background:#efefef"></div>
<div class="a" style="left:127px;top:767px;width:1112px;height:1px;background:#a0a0a0"></div>
<div class="t" style="left:127px;top:753px;width:20px;text-align:right;font-size:11px">1</div>
<div class="t" style="left:152px;top:753px;font-size:11px">Bagno</div>
<div class="t" style="left:707px;top:753px;width:98px;text-align:right;font-size:11px">7,45</div>
<div class="t" style="left:1109px;top:753px;width:97px;text-align:right;font-size:11px">7,450</div>
<div class="a" style="left:127px;top:768px;width:1112px;height:18px;background:#f0f9fd"></div>
<div class="a" style="left:127px;top:768px;width:23px;height:18px;background:#fdfde6"></div>
<div class="a" style="left:1109px;top:768px;width:100px;height:18px;background:#fdfde0"></div>
<div class="a" style="left:127px;top:786px;width:1112px;height:1px;background:#a0a0a0"></div>
<div class="t" style="left:127px;top:772px;width:20px;text-align:right;font-size:11px">2</div>
<div class="t" style="left:152px;top:772px;font-size:11px">Camera</div>
<div class="t" style="left:707px;top:772px;width:98px;text-align:right;font-size:11px">16,20</div>
<div class="t" style="left:1109px;top:772px;width:97px;text-align:right;font-size:11px">16,200</div>
<div class="a" style="left:127px;top:787px;width:1112px;height:18px;background:#ffffff"></div>
<div class="a" style="left:127px;top:787px;width:23px;height:18px;background:#fdfde6"></div>
<div class="a" style="left:1109px;top:787px;width:100px;height:18px;background:#fdfde0"></div>
<div class="a" style="left:127px;top:805px;width:1112px;height:1px;background:#a0a0a0"></div>
<div class="t" style="left:127px;top:791px;width:20px;text-align:right;font-size:11px">3</div>
<div class="t" style="left:152px;top:791px;font-size:11px">Ingresso</div>
<div class="t" style="left:707px;top:791px;width:98px;text-align:right;font-size:11px">224,94</div>
<div class="t" style="left:1109px;top:791px;width:97px;text-align:right;font-size:11px">224,940</div>
<div class="a" style="left:127px;top:806px;width:1112px;height:18px;background:#f0f9fd"></div>
<div class="a" style="left:127px;top:806px;width:23px;height:18px;background:#fdfde6"></div>
<div class="a" style="left:1109px;top:806px;width:100px;height:18px;background:#fdfde0"></div>
<div class="a" style="left:127px;top:824px;width:1112px;height:1px;background:#a0a0a0"></div>
<div class="t" style="left:127px;top:810px;width:20px;text-align:right;font-size:11px">4</div>
<div class="t" style="left:152px;top:810px;font-size:11px">Cucina</div>
<div class="t" style="left:707px;top:810px;width:98px;text-align:right;font-size:11px">92,20</div>
<div class="t" style="left:1109px;top:810px;width:97px;text-align:right;font-size:11px">92,200</div>
<div class="a" style="left:127px;top:825px;width:1112px;height:18px;background:#ffffff"></div>
<div class="a" style="left:127px;top:825px;width:23px;height:18px;background:#fdfde6"></div>
<div class="a" style="left:1109px;top:825px;width:100px;height:18px;background:#fdfde0"></div>
<div class="a" style="left:127px;top:843px;width:1112px;height:1px;background:#a0a0a0"></div>
<div class="t" style="left:127px;top:829px;width:20px;text-align:right;font-size:11px">5</div>
<div class="t" style="left:152px;top:829px;font-size:11px">Sala</div>
<div class="t" style="left:707px;top:829px;width:98px;text-align:right;font-size:11px">4,72</div>
<div class="t" style="left:1109px;top:829px;width:97px;text-align:right;font-size:11px">4,720</div>
<div class="a" style="left:150px;top:749px;width:1px;height:95px;background:#a0a0a0"></div>
<div class="a" style="left:150px;top:731px;width:1px;height:18px;background:#000"></div>
<div class="a" style="left:668px;top:749px;width:1px;height:95px;background:#a0a0a0"></div>
<div class="a" style="left:668px;top:731px;width:1px;height:18px;background:#000"></div>
<div class="a" style="left:706px;top:749px;width:1px;height:95px;background:#a0a0a0"></div>
<div class="a" style="left:706px;top:731px;width:1px;height:18px;background:#000"></div>
<div class="a" style="left:807px;top:749px;width:1px;height:95px;background:#a0a0a0"></div>
<div class="a" style="left:807px;top:731px;width:1px;height:18px;background:#000"></div>
<div class="a" style="left:907px;top:749px;width:1px;height:95px;background:#a0a0a0"></div>
<div class="a" style="left:907px;top:731px;width:1px;height:18px;background:#000"></div>
<div class="a" style="left:1008px;top:749px;width:1px;height:95px;background:#a0a0a0"></div>
<div class="a" style="left:1008px;top:731px;width:1px;height:18px;background:#000"></div>
<div class="a" style="left:1108px;top:749px;width:1px;height:95px;background:#a0a0a0"></div>
<div class="a" style="left:1108px;top:731px;width:1px;height:18px;background:#000"></div>
<div class="a" style="left:1209px;top:749px;width:1px;height:95px;background:#a0a0a0"></div>
<div class="a" style="left:1209px;top:731px;width:1px;height:18px;background:#000"></div>
<div class="a" style="left:127px;top:911px;width:1112px;height:1px;background:#a0a0a0"></div>
<div class="a" style="left:127px;top:912px;width:1112px;height:23px;background:#f0f0f0"></div>
<div class="a" style="left:1011px;top:914px;width:96px;height:19px;border:1px solid #a0a0a0"></div>
<div class="t" style="left:1011px;top:918px;width:93px;text-align:right;font-size:11px">Totale m3</div>
<div class="a" style="left:1111px;top:914px;width:97px;height:19px;border:1px solid #a0a0a0"></div>
<div class="t" style="left:1111px;top:918px;width:94px;text-align:right;font-size:11px">345,510</div>
<!-- formula bar -->
<div class="a" style="left:126px;top:938px;width:1114px;height:19px;background:#f0c9a4;border:1px solid #a0a0a0"></div>
<div class="t" style="left:130px;top:942px;font-size:11px;color:#1a1a1a">Formula: 5*0,09+7</div>

<!-- STATUS BAR -->
<div class="a" style="left:1px;top:962px;width:1269px;height:21px;background:#f0f0f0"></div>
<div class="a" style="left:1px;top:962px;width:1269px;height:1px;background:#fff"></div>
<div class="a" style="left:2px;top:965px;width:960px;height:18px;border-left:1px solid #a0a0a0;border-top:1px solid #a0a0a0;border-right:1px solid #fff"></div>
<div class="a" style="left:964px;top:965px;width:67px;height:18px;border-left:1px solid #a0a0a0;border-top:1px solid #a0a0a0;border-right:1px solid #fff"></div>
<div class="a" style="left:1033px;top:965px;width:157px;height:18px;border-left:1px solid #a0a0a0;border-top:1px solid #a0a0a0;border-right:1px solid #fff"></div>
<div class="a" style="left:1192px;top:965px;width:31px;height:18px;border-left:1px solid #a0a0a0;border-top:1px solid #a0a0a0;border-right:1px solid #fff"></div>
<div class="a" style="left:1226px;top:965px;width:28px;height:18px;border-left:1px solid #a0a0a0;border-top:1px solid #a0a0a0;border-right:1px solid #fff"></div>
<div class="t" style="left:975px;top:968px;font-size:11.5px;color:#1a1a1a">v. 12.01f</div>
<div class="t" style="left:1195px;top:969px;font-size:11px;color:#a8a8a8">MAIU</div>
<div class="t" style="left:1227px;top:969px;font-size:11px;color:#1a1a1a">NUM</div>
<div class="a" style="left:459px;top:292px;width:418px;height:334px;background:#f0f0f0;border:1px solid #a8a8a8;border-radius:8px;box-shadow:1px 1px 0 #d0d0d0"></div>
<div class="a" style="left:460px;top:293px;width:416px;height:30px;background:#f0f3f6;border-radius:7px 7px 0 0"></div>
<div class="t" style="left:464px;top:302px;font-size:12.3px;color:#1e1e1e">Formula per PARTIUGUALI</div>
<div class="a" style="left:461px;top:323px;width:414px;height:262px;background:#fff;border:1px solid #3c7fd8"></div>
<div class="t" style="left:463px;top:328px;font-size:13px;color:#1e1e1e">5*0,09+7</div>
<div class="a" style="left:461px;top:596px;width:104px;height:22px;background:#fdfde6;border:1px solid #a0a0a0"></div>
<div class="t" style="left:465px;top:601px;font-size:12px;color:#1e1e1e">Risultato formula:</div>
<div class="a" style="left:567px;top:596px;width:102px;height:22px;background:#f0c9a4;border:1px solid #a0a0a0"></div>
<div class="t" style="left:567px;top:601px;width:98px;text-align:right;font-size:12px;color:#1e1e1e">7,45</div>
<div class="a" style="left:707px;top:593px;width:82px;height:28px;background:#f0f0f0;border:1px solid #e3e3e3;border-right:1px solid #646464;border-bottom:1px solid #646464;box-shadow:inset -1px -1px 0 #a0a0a0, inset 1px 1px 0 #fff"></div>
<div class="t" style="left:707px;top:601px;width:82px;text-align:center;font-size:12px;color:#1e1e1e">Salva</div>
<div class="a" style="left:793px;top:593px;width:82px;height:28px;background:#f0f0f0;border:1px solid #e3e3e3;border-right:1px solid #646464;border-bottom:1px solid #646464;box-shadow:inset -1px -1px 0 #a0a0a0, inset 1px 1px 0 #fff"></div>
<div class="t" style="left:793px;top:601px;width:82px;text-align:center;font-size:12px;color:#1e1e1e">Annulla</div>
<div class="a" style="left:882px;top:451px;width:163px;height:2px;background:#000"></div>
<svg class="a" style="left:880px;top:446px" width="12" height="12"><path d="M1 6 L10 2 L10 10 Z" fill="#000"/></svg>
<div class="a" style="left:1044px;top:422px;width:177px;height:59px;background:#fbfe96;border:2px solid #1a1a1a;border-radius:6px"></div>
<div class="t" style="left:1044px;top:443px;width:177px;text-align:center;font-size:18.6px;color:#111">Editor formula</div>
<div class="a" style="left:242px;top:945px;width:170px;height:2px;background:#000"></div>
<svg class="a" style="left:238px;top:940px" width="12" height="12"><path d="M1 6 L10 2 L10 10 Z" fill="#000"/></svg>
<div class="a" style="left:410px;top:918px;width:237px;height:55px;background:#fbfe96;border:2px solid #1a1a1a;border-radius:6px"></div>
<div class="t" style="left:410px;top:935px;width:237px;text-align:center;font-size:18px;color:#111">Visualizzazione formula</div>
<svg class="a" style="left:45px;top:716px" width="29" height="32" viewBox="0 0 29 32"><path d="M0.5 15 L16 5.5 L27.5 11.5 L11.5 21 Z" fill="#8a5a10"/><path d="M14.5 8.0 L22.5 12.0 L23.0 3.5 L15.0 -0.5 Z" fill="#e4e4e4" stroke="#606060" stroke-width="0.6"/><path d="M12.2 9.5 L20.2 13.5 L20.7 5.0 L12.7 1.0 Z" fill="#f8f8f8" stroke="#606060" stroke-width="0.6"/><path d="M9.899999999999999 11.0 L17.9 15.0 L18.4 6.5 L10.399999999999999 2.5 Z" fill="#e4e4e4" stroke="#606060" stroke-width="0.6"/><path d="M7.6 12.5 L15.6 16.5 L16.1 8.0 L8.1 4.0 Z" fill="#f8f8f8" stroke="#606060" stroke-width="0.6"/><path d="M5.3 14.0 L13.3 18.0 L13.8 9.5 L5.8 5.5 Z" fill="#e4e4e4" stroke="#606060" stroke-width="0.6"/><path d="M3.0 15.5 L11.0 19.5 L11.5 11.0 L3.5 7.0 Z" fill="#f8f8f8" stroke="#606060" stroke-width="0.6"/><path d="M0.5 15 L11.5 21 L11.5 30.5 L0.5 24.5 Z" fill="#f4b830" stroke="#6a4000" stroke-width="0.7"/><path d="M11.5 21 L27.5 11.5 L27.5 19.5 L11.5 30.5 Z" fill="#c8881a" stroke="#6a4000" stroke-width="0.7"/><path d="M2.5 19.5 L8.5 22.7 L8.5 26.5 L2.5 23.3 Z" fill="#d8a070" stroke="#603010" stroke-width="0.6"/></svg>
<svg class="a" style="left:53px;top:796px" width="26" height="31" viewBox="0 0 26 31"><path d="M0.5 0.5 H19 L25 6.5 V30 H0.5 Z" fill="#fff" stroke="#000"/><path d="M19 0.5 V6.5 H25" fill="#e8e8e8" stroke="#000" stroke-width="0.8"/><path d="M4 8 H21 M4 12 H21 M4 16 H21 M4 20 H21 M4 24 H21 M9 7 V26 M15 7 V26" stroke="#b8b8b8" stroke-width="1"/><path d="M4 3.5 H14" stroke="#c8c8c8" stroke-width="1"/></svg>
<svg class="a" style="left:46px;top:867px" width="30" height="33" viewBox="0 0 30 33"><defs><radialGradient id="hd1" cx="0.4" cy="0.35" r="0.6"><stop offset="0" stop-color="#fff"/><stop offset="1" stop-color="#707070"/></radialGradient></defs><path d="M20 30 L29 26 L27 23 L22 25 Z" fill="#707070" opacity="0.7"/><path d="M16.5 9 L24.5 8.5 L24.5 28 L19 30.5 L16.5 29 Z" fill="#c01850" stroke="#000" stroke-width="1.1"/><path d="M19 9 L22 8.8 L22 29 L19 30" fill="#e04880"/><path d="M1.5 9.5 L10.5 9 L11 29 L8 29.5 L6 28.8 L4 29 L1.5 28 Z" fill="#9898d8" stroke="#000" stroke-width="1.1"/><path d="M7.5 20 V28.5" stroke="#404080" stroke-width="0.9"/><path d="M2.5 10.5 L9.5 10" stroke="#fff" stroke-width="0.9"/><path d="M10 12.5 L20 12 L20 30.5 L16 31.5 L14 31 L12 31.5 L10 30.5 Z" fill="#f8c000" stroke="#000" stroke-width="1.1"/><path d="M15.5 12.2 L20 12 L20 30.5 L15.5 31.5 Z" fill="#f87000"/><path d="M14.5 22 V31" stroke="#c06000" stroke-width="0.9"/><path d="M11 13.5 L18 13" stroke="#fff" stroke-width="0.9"/><circle cx="6.8" cy="5" r="3.7" fill="url(#hd1)" stroke="#000" stroke-width="0.9"/><circle cx="19.3" cy="4.6" r="3.7" fill="url(#hd1)" stroke="#000" stroke-width="0.9"/><circle cx="14.8" cy="8.2" r="3.7" fill="url(#hd1)" stroke="#000" stroke-width="0.9"/></svg>
<svg class="a" style="left:127px;top:706px" width="14" height="15" viewBox="0 0 14 15"><rect x="0.5" y="2.5" width="12" height="12" rx="1" fill="#f8d070" stroke="#c89040"/><rect x="1.5" y="3.5" width="10" height="3" fill="#fce8b0"/><circle cx="8.5" cy="3" r="2.6" fill="#3a7ad0" stroke="#1a4a90" stroke-width="0.6"/></svg>
<svg class="a" style="left:1251px;top:166px" width="14" height="14" viewBox="0 0 14 14"><path d="M7 0.8 L8.3 2.4 L10.3 1.8 L10.7 3.9 L12.7 4.6 L11.9 6.5 L13.2 8.1 L11.4 9.2 L11.4 11.3 L9.3 11.2 L8.2 13 L6.5 11.8 L4.6 12.7 L4 10.6 L1.9 10.1 L2.6 8.1 L1 6.7 L2.6 5.3 L2.2 3.3 L4.3 3 L5.2 1.1 Z" fill="#e4e8f0" stroke="#34448a" stroke-width="1"/><circle cx="7" cy="7" r="2" fill="#c8c8c8" stroke="#34448a" stroke-width="1"/></svg>
<svg class="a" style="left:1252px;top:320px" width="13" height="15" viewBox="0 0 13 15"><rect x="0.5" y="0.5" width="11.5" height="13.5" fill="#f4f8fc" stroke="#5a90d8"/><path d="M3 0 H7 V7 L5 5.5 L3 7 Z" fill="#c01818"/><path d="M3 10 H9 M3 12 H9" stroke="#4a80c8" stroke-width="0.9"/></svg>
<svg class="a" style="left:1251px;top:417px" width="14" height="14" viewBox="0 0 14 14"><path d="M10.5 11.5 L13 9.5" stroke="#666" stroke-width="1.2"/><rect x="0.5" y="0.5" width="10" height="12" fill="#fffff4" stroke="#5a4e48"/><path d="M2 2.5 H9" stroke="#10a010" stroke-width="1.2"/><path d="M2 4.5 H9 M2 8.5 H9" stroke="#808080" stroke-width="1"/><path d="M2 6.5 H9 M2 10.5 H9" stroke="#8a8a10" stroke-width="1.2"/></svg>
<svg class="a" style="left:240px;top:168px" width="15" height="15" viewBox="0 0 15 15"><defs><radialGradient id="bc" cx="0.4" cy="0.3" r="0.75"><stop offset="0" stop-color="#60b0ff"/><stop offset="0.7" stop-color="#0a60d0"/><stop offset="1" stop-color="#0448a0"/></radialGradient></defs><circle cx="7.5" cy="7.5" r="7" fill="url(#bc)"/><path d="M4 4 L11 11 M4 4 H8.5 M4 4 V8.5" stroke="#fff" stroke-width="2" fill="none"/></svg>
<div class="a" style="left:1014px;top:708px;width:10px;height:10px;background:#fff"></div>
<svg class="a" style="left:1257px;top:970px" width="12" height="12" viewBox="0 0 12 12"><path d="M11 2 L2 11 M11 6 L6 11 M11 10 L10 11" stroke="#a0a0a0" stroke-width="1.2"/></svg>
</body></html>
